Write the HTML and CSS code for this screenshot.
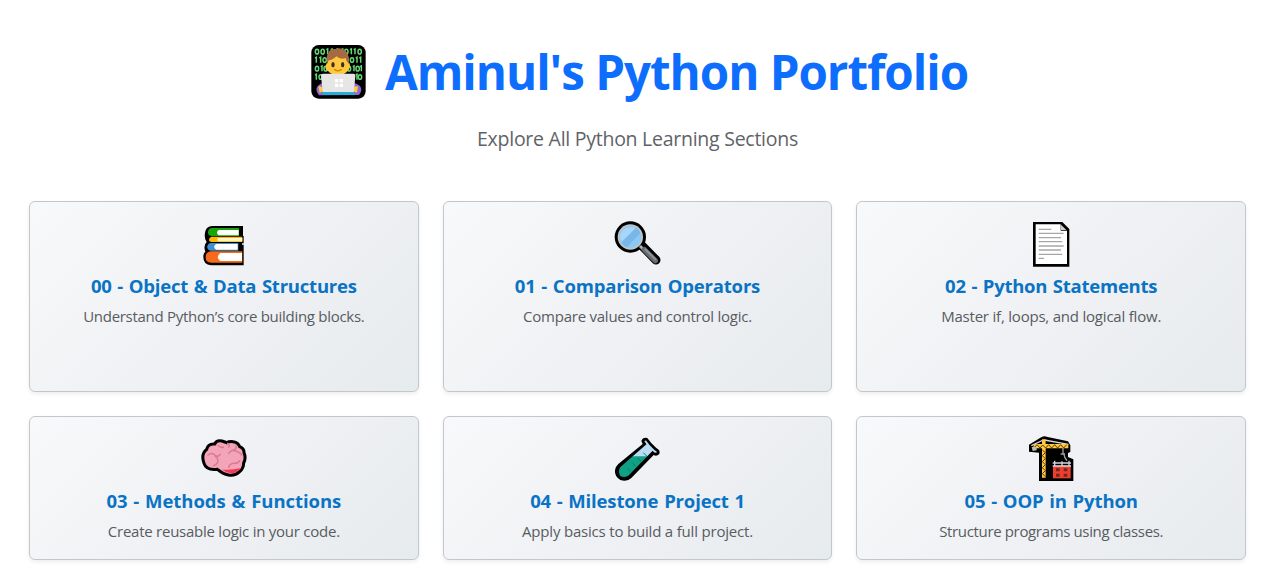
FILE: index.html
```html
<!DOCTYPE html>
<html lang="en">
<head>
<meta charset="utf-8">
<title>Aminul's Python Portfolio</title>
<link rel="stylesheet" href="styles.css">
</head>
<body>
<header class="hero">
  <h1 class="title">
    <svg class="coder" viewBox="30 27 171 171" aria-hidden="true">
      <rect x="34" y="30" width="163" height="161" rx="22"/>
      <g fill="none" stroke="#63d875" stroke-width="4.5">
        <ellipse cx="51" cy="50" rx="5" ry="7"/><ellipse cx="68" cy="50" rx="5" ry="7"/><path d="M79 44l4-2v16M92 44l4-2v16M108 44l4-2v16M124 44l4-2v16"/>
        <ellipse cx="139" cy="50" rx="5" ry="7"/><path d="M150 44l4-2v16M161 44l4-2v16"/><ellipse cx="179" cy="50" rx="5" ry="7"/>
        <path d="M45 69l4-2v16M58 69l4-2v16M178 69l4-2v16M167 69l4-2v16"/><ellipse cx="74" cy="75" rx="5" ry="7"/><ellipse cx="156" cy="75" rx="5" ry="7"/>
        <ellipse cx="51" cy="101" rx="5" ry="7"/><path d="M62 95l4-2v16M158 95l4-2v16M180 95l4-2v16"/><ellipse cx="77" cy="101" rx="5" ry="7"/><ellipse cx="147" cy="101" rx="5" ry="7"/><ellipse cx="173" cy="101" rx="5" ry="7"/>
        <path d="M45 120l4-2v16M167 120l4-2v16"/><ellipse cx="62" cy="126" rx="5" ry="7"/><ellipse cx="180" cy="126" rx="5" ry="7"/>
      </g>
      <path d="M57 181Q38 157 66 145H165Q195 156 177 180Z" fill="#8b6bd2"/>
      <path d="M84 108Q74 105 77 93Q79 83 84 82Q79 43 111 42Q148 40 146 82Q152 88 149 99Q147 106 143 107Q134 120 113 120Q94 120 84 108Z" fill="#ffc83d"/>
      <path d="M82 87Q77 64 85 54Q89 41 108 42Q118 36 132 44Q148 53 147 88Q138 80 137 69Q121 75 109 64Q99 75 86 76Z" fill="#a56a43"/>
      <ellipse cx="99" cy="89" rx="5" ry="8" fill="#402a32"/><ellipse cx="128" cy="89" rx="5" ry="8" fill="#402a32"/>
      <path d="M102 103Q114 112 125 103" fill="none" stroke="#d67d00" stroke-width="4"/>
      <path d="M55 154Q70 151 70 169L59 173ZM174 154Q158 151 160 169L171 173Z" fill="#ffc83d"/>
      <path d="M69 116H160Q166 116 166 122L162 171H68L63 122Q63 116 69 116Z" fill="#e6e6e6"/>
      <path d="M105 132h10v10h-10zm14 0h10v10h-10zm-14 14h10v10h-10zm14 0h10v10h-10z" fill="#fff"/>
      <path d="M67 171H164V180H67Z" fill="#28aed5"/>
    </svg>
    <span class="title-text">Aminul's Python Portfolio</span>
  </h1>
  <p class="lead">Explore All Python Learning Sections</p>
</header>
<main class="grid">
  <a class="card">
    <svg class="icon" viewBox="18 18 144 144" aria-hidden="true">
      <path d="M54 33H147V63H149V85H144V89H149V151H51Q28 149 28 126Q28 113 34 110Q27 91 38 81Q29 70 34 49Q38 34 54 33Z"/>
      <path d="M54 39H135V63H52Q40 60 42 50Q44 40 54 39Z" fill="#16a50c"/><path d="M74 45H134V61H74Q64 53 74 45Z" fill="#fff"/>
      <path d="M52 65H145V81H52Q41 78 47 69Z" fill="#fcb900"/><path d="M73 69H145V79H73Q67 74 73 69Z" fill="#fff5d0"/>
      <path d="M51 84H133V107H49Q38 104 40 94Q42 85 51 84Z" fill="#3c8fd3"/><path d="M66 87H131V104H66Q55 96 66 87Z" fill="#fff"/>
      <path d="M51 109H145V143H51Q34 142 35 126Q35 111 51 109Z" fill="#f76a1b"/><path d="M79 114H144V138H79Q64 127 79 114Z" fill="#fff"/>
    </svg>
    <h2 class="name n0">00 - Object &amp; Data Structures</h2>
    <p class="desc d0">Understand Python’s core building blocks.</p>
  </a>
  <a class="card">
    <svg class="icon" viewBox="18 18 144 144" aria-hidden="true">
      <path d="M104 91L147 135" stroke="#000" stroke-width="27" stroke-linecap="round"/>
      <circle cx="70" cy="66" r="47"/><circle cx="70" cy="66" r="38" fill="#c1c4c8"/><circle cx="70" cy="66" r="33" fill="#8cc8f4"/>
      <path d="M43 82L87 38Q96 43 100 54L60 97Q49 94 43 82Z" fill="#7ab7e9"/><path d="M39 67Q40 39 71 36L86 39L43 81Z" fill="#a8d5f8"/>
      <path d="M99 93L108 102" stroke="#abb0b5" stroke-width="9"/><path d="M112 104L145 137" stroke="#636a70" stroke-width="16" stroke-linecap="round"/><path d="M115 103L145 133" stroke="#8c9297" stroke-width="6" stroke-linecap="round"/>
    </svg>
    <h2 class="name n1">01 - Comparison Operators</h2>
    <p class="desc d1">Compare values and control logic.</p>
  </a>
  <a class="card">
    <svg class="icon" viewBox="21 18 144 144" aria-hidden="true">
      <path d="M39 21H127L148 42V155H39Z"/><path d="M47 28H122V47H141V147H47Z" fill="#fff"/><path d="M123 29L139 45H123Z" fill="#cfcfcf"/>
      <path d="M56 43H94M56 55H131M56 68H123M56 80H127M56 93H131M56 105H123M56 118H127M56 130H72" stroke="#a7a7a7" stroke-width="4" fill="none"/>
    </svg>
    <h2 class="name n2">02 - Python Statements</h2>
    <p class="desc d2">Master if, loops, and logical flow.</p>
  </a>
  <a class="card">
    <svg class="icon" viewBox="18 18 144 144" aria-hidden="true">
      <path d="M30 100Q20 72 38 58Q42 40 62 42Q68 29 84 33Q94 36 98 38Q106 33 118 35Q133 37 137 50Q151 56 150 68Q157 84 149 99Q149 115 137 125Q123 139 103 135Q87 132 70 118Q37 122 30 100Z" fill="#f4a4b8" stroke="#000" stroke-width="9"/>
      <path d="M91 119Q116 120 142 114Q130 130 110 130Q98 129 84 119Z" fill="#f13b55"/>
      <path d="M72 46Q77 53 88 52M42 75Q55 65 63 76Q72 83 79 73M64 79Q76 88 70 99Q66 105 59 107M101 40Q109 45 104 51M126 47Q129 58 117 61Q109 63 104 70M121 62Q137 65 143 75M104 112Q107 99 124 100Q135 98 137 92" fill="none" stroke="#d77c91" stroke-width="4.5" stroke-linecap="round"/>
    </svg>
    <h2 class="name n3">03 - Methods &amp; Functions</h2>
    <p class="desc d3">Create reusable logic in your code.</p>
  </a>
  <a class="card">
    <svg class="icon" viewBox="18 18 144 144" aria-hidden="true">
      <path d="M103 33Q108 20 121 24Q130 38 148 54Q161 60 157 72Q149 80 140 75L73 144Q60 157 40 150Q22 139 24 121Q25 110 34 102L107 42Z"/>
      <path d="M110 34Q110 28 118 29Q127 43 145 59Q154 62 151 69Q144 73 137 66L68 137Q55 150 40 141Q26 128 37 111L115 42Z" fill="#b9dcf4"/>
      <path d="M72 79H123L68 137Q55 150 40 141Q26 128 37 111Z" fill="#10a184"/>
      <path d="M110 35Q110 28 118 29Q127 43 145 59Q154 62 151 69Q144 73 137 66L68 137Q55 148 40 141Q28 128 37 111L115 42Z" fill="none" stroke="#000" stroke-width="5"/>
      <path d="M109 68L119 78M92 84L102 94M76 99L87 109M61 115L71 125" stroke="#087b68" stroke-width="3"/>
    </svg>
    <h2 class="name n4">04 - Milestone Project 1</h2>
    <p class="desc d4">Apply basics to build a full project.</p>
  </a>
  <a class="card">
    <svg class="icon" viewBox="21 18 144 144" aria-hidden="true">
      <path d="M27 44L61 23Q70 15 83 21L144 34L151 46V66L144 69V81L160 88V153H57V68L27 65Z"/>
      <path d="M70 30L34 47M73 30L145 43" stroke="#d8d8d8" stroke-width="4"/>
      <path d="M66 28H77V143H66ZM43 42H145V55H38Z" fill="#ffc83d"/>
      <path d="M41 54L51 44L60 54L68 45L77 54L86 44L95 54L104 44L113 54L122 44L131 54L140 44M67 60L76 68L67 77L76 86L67 95L76 104L67 113L76 122L67 131L76 140" fill="none" stroke="#4f3b14" stroke-width="3"/>
      <path d="M35 51H50V61L38 63Z" fill="#bbb"/><path d="M129 54V74M122 72H135M132 73Q133 84 141 92" fill="none" stroke="#9da0a5" stroke-width="4"/>
      <path d="M99 107H152V145H99Z" fill="#ed3f2f"/><path d="M108 115H119V124H108ZM131 115H142V124H131ZM108 131H119V140H108ZM131 131H142V140H131Z" fill="#71271f"/>
      <path d="M98 99H153M98 108H153M104 92V110M126 94V110M147 92V110" stroke="#d4d5d9" stroke-width="4"/>
    </svg>
    <h2 class="name n5">05 - OOP in Python</h2>
    <p class="desc d5">Structure programs using classes.</p>
  </a>
</main>
</body>
</html>
```
FILE: styles.css
```css
* { box-sizing: border-box; }
body {
  margin: 0;
  padding: 39px 27px 18px 29px;
  background: #fff;
  font-family: "Segoe UI", "Open Sans", "Noto Sans", sans-serif;
}
.hero { text-align: center; }
.title {
  display: flex;
  align-items: center;
  justify-content: center;
  gap: 18px;
  margin: 0;
  padding-left: 3px;
  height: 67px;
  color: #0d6efd;
  font-size: 47.5px;
  font-weight: 700;
  line-height: 67px;
  white-space: nowrap;
}
.coder { width: 57px; height: 57px; }
.title-text { padding-bottom: 2px; letter-spacing: -1.02px; }
.lead {
  margin: 18px 0 47px;
  color: #5f6368;
  font-size: 19.5px;
  line-height: 30px;
  letter-spacing: -0.26px;
}
.grid {
  display: grid;
  grid-template-columns: repeat(3, minmax(0, 1fr));
  grid-template-rows: 191px 144px;
  gap: 24px;
}
.card {
  display: flex;
  flex-direction: column;
  align-items: center;
  padding-top: 19px;
  border: 1px solid #c3c7cc;
  border-radius: 6px;
  background: linear-gradient(135deg, #f8f9fa, #f0f1f4 50%, #e6ebee);
  box-shadow: 0 2px 4px rgba(0, 0, 0, 0.075);
  white-space: nowrap;
}
.icon { width: 48px; height: 48px; }
.name {
  margin: 4px 0 0;
  color: #0a73c4;
  font-size: 18.5px;
  font-weight: 700;
  line-height: 25px;
  word-spacing: 1.1px;
}
.n0 { letter-spacing: -0.22px; }
.n1 { letter-spacing: -0.19px; }
.n2 { letter-spacing: -0.25px; }
.n3 { letter-spacing: -0.05px; }
.n4 { letter-spacing: -0.15px; }
.n5 { letter-spacing: -0.12px; }
.desc {
  margin: 6px 0 0;
  color: #575c61;
  font-size: 15px;
  line-height: 24px;
}
.d0 { letter-spacing: -0.28px; }
.d1 { letter-spacing: -0.24px; }
.d2 { letter-spacing: -0.21px; }
.d3 { letter-spacing: -0.25px; }
.d4 { letter-spacing: -0.19px; }
.d5 { letter-spacing: -0.35px; }
```
